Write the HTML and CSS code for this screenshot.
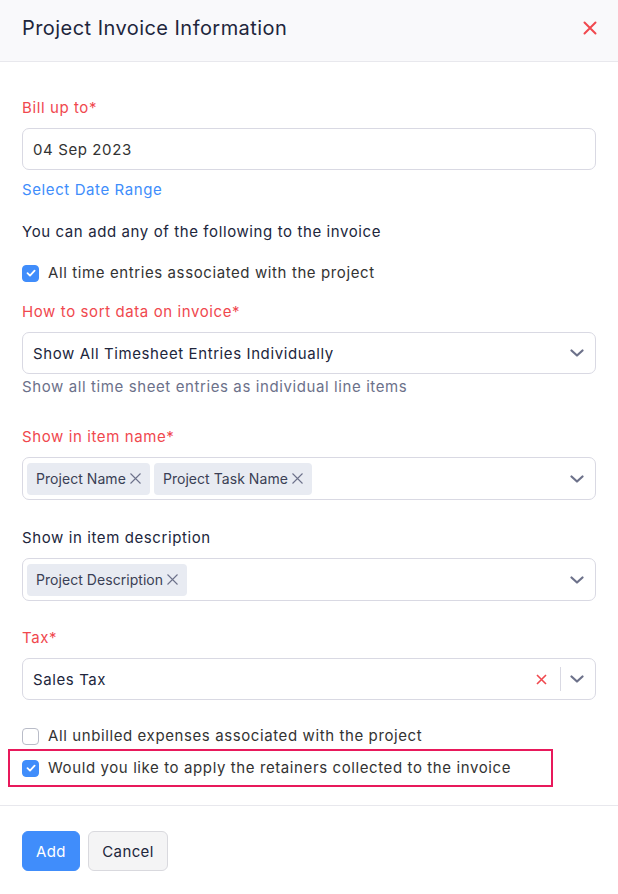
FILE: index.html
```html
<!DOCTYPE html>
<html>
<head>
<meta charset="utf-8">
<link rel="stylesheet" href="styles.css">
</head>
<body>
<div class="modal">
  <div class="header">
    <h1 class="title">Project Invoice Information</h1>
    <span class="close">
      <svg width="14" height="14" viewBox="0 0 14 14"><path d="M1.5 1.5L12.5 12.5M12.5 1.5L1.5 12.5" stroke="#f0484e" stroke-width="2" stroke-linecap="round"/></svg>
    </span>
  </div>
  <div class="body">
    <div class="label req">Bill up to*</div>
    <div class="field input">04 Sep 2023</div>
    <div class="link">Select Date Range</div>
    <div class="intro">You can add any of the following to the invoice</div>
    <div class="check-row row-time">
      <span class="cb checked"><svg width="12" height="12" viewBox="0 0 12 12"><path d="M2.5 6.2L5 8.6L9.6 3.6" fill="none" stroke="#fff" stroke-width="1.8" stroke-linecap="round" stroke-linejoin="round"/></svg></span>
      <span>All time entries associated with the project</span>
    </div>
    <div class="label req lbl-sort">How to sort data on invoice*</div>
    <div class="field select">
      <span class="val">Show All Timesheet Entries Individually</span>
      <svg class="chev" width="14" height="8" viewBox="0 0 14 8"><path d="M1.5 1.5L7 6.5L12.5 1.5" fill="none" stroke="#6c718a" stroke-width="2.2" stroke-linecap="round" stroke-linejoin="round"/></svg>
    </div>
    <div class="help">Show all time sheet entries as individual line items</div>
    <div class="label req lbl-gap">Show in item name*</div>
    <div class="field multi">
      <div class="tags">
        <span class="tag">Project Name<svg width="11" height="11" viewBox="0 0 11 11"><path d="M0.5 0.5L10.5 10.5M10.5 0.5L0.5 10.5" stroke="#6c718a" stroke-width="1.1"/></svg></span>
        <span class="tag">Project Task Name<svg width="11" height="11" viewBox="0 0 11 11"><path d="M0.5 0.5L10.5 10.5M10.5 0.5L0.5 10.5" stroke="#6c718a" stroke-width="1.1"/></svg></span>
      </div>
      <svg class="chev" width="14" height="8" viewBox="0 0 14 8"><path d="M1.5 1.5L7 6.5L12.5 1.5" fill="none" stroke="#6c718a" stroke-width="2.2" stroke-linecap="round" stroke-linejoin="round"/></svg>
    </div>
    <div class="label plain lbl-gap">Show in item description</div>
    <div class="field multi">
      <div class="tags">
        <span class="tag">Project Description<svg width="11" height="11" viewBox="0 0 11 11"><path d="M0.5 0.5L10.5 10.5M10.5 0.5L0.5 10.5" stroke="#6c718a" stroke-width="1.1"/></svg></span>
      </div>
      <svg class="chev" width="14" height="8" viewBox="0 0 14 8"><path d="M1.5 1.5L7 6.5L12.5 1.5" fill="none" stroke="#6c718a" stroke-width="2.2" stroke-linecap="round" stroke-linejoin="round"/></svg>
    </div>
    <div class="label req lbl-gap lbl-tax">Tax*</div>
    <div class="field select">
      <span class="val">Sales Tax</span>
      <span class="clear"><svg width="11" height="11" viewBox="0 0 11 11"><path d="M1 1L10 10M10 1L1 10" stroke="#f0484e" stroke-width="1.6"/></svg></span>
      <span class="sep"></span>
      <svg class="chev" width="14" height="8" viewBox="0 0 14 8"><path d="M1.5 1.5L7 6.5L12.5 1.5" fill="none" stroke="#6c718a" stroke-width="2.2" stroke-linecap="round" stroke-linejoin="round"/></svg>
    </div>
    <div class="check-row row-exp">
      <span class="cb"></span>
      <span>All unbilled expenses associated with the project</span>
    </div>
    <div class="highlight">
      <div class="check-row">
        <span class="cb checked"><svg width="12" height="12" viewBox="0 0 12 12"><path d="M2.5 6.2L5 8.6L9.6 3.6" fill="none" stroke="#fff" stroke-width="1.8" stroke-linecap="round" stroke-linejoin="round"/></svg></span>
        <span>Would you like to apply the retainers collected to the invoice</span>
      </div>
    </div>
  </div>
  <div class="footer">
    <button class="btn primary">Add</button>
    <button class="btn secondary">Cancel</button>
  </div>
</div>
</body>
</html>
```

FILE: styles.css
```css
* { box-sizing: border-box; }
html, body { margin: 0; padding: 0; background: #fff; }
body {
  font-family: Inter, "Noto Sans", "Liberation Sans", sans-serif;
  font-size: 15px;
  letter-spacing: 0.6px;
  color: #21263c;
}
.modal { width: 618px; }
.header {
  height: 62px;
  background: #f9f9fb;
  border-bottom: 1px solid #e8e8ed;
  display: flex;
  align-items: center;
  justify-content: space-between;
  padding: 0 21px 5px 22px;
}
.title {
  margin: 0;
  font-size: 20px;
  font-weight: 400;
  letter-spacing: 0.45px;
  color: #21263c;
  line-height: 24px;
}
.close { display: flex; width: 14px; height: 14px; }
.body { padding: 36px 22px 0 22px; }
.label { line-height: 20px; height: 20px; }
.req { color: #f0484e; }
.plain { color: #21263c; }
.field {
  margin-top: 10px;
  height: 42px;
  border: 1px solid #d9d9e3;
  border-radius: 7px;
  display: flex;
  align-items: center;
}
.input { padding: 0 10px; color: #333; }
.select { padding: 0 11px 0 10px; }
.select .val { flex: 1; color: #21263c; }
.chev { display: block; flex: none; }
.multi { padding: 0 11px 0 4px; height: 43px; }
.multi .tags { flex: 1; display: flex; gap: 4px; }
.tag {
  display: inline-flex;
  align-items: center;
  height: 32px;
  padding: 0 9px 0 9px;
  background: #e8ebf2;
  border-radius: 4px;
  font-size: 14px;
  letter-spacing: 0.05px;
  color: #3a3f55;
  gap: 4px;
}
.tag svg { display: block; }
.clear { display: flex; margin-right: 13px; }
.sep { width: 1px; height: 24px; background: #d9d9e3; margin-right: 9px; }
.link { margin-top: 10px; line-height: 20px; color: #408dfb; }
.intro { margin-top: 22px; line-height: 20px; color: #21263c; }
.check-row { display: flex; align-items: center; line-height: 20px; gap: 9px; color: #333; }
.row-time { margin-top: 21px; }
.row-exp { margin-top: 26px; }
.cb {
  width: 17px; height: 17px;
  border: 1px solid #b9bcc8;
  border-radius: 4px;
  background: #fff;
  display: flex; align-items: center; justify-content: center;
  flex: none;
}
.cb.checked { background: #408dfb; border-color: #408dfb; }
.lbl-sort { margin-top: 19px; }
.help { margin-top: 3px; line-height: 20px; color: #6c718a; }
.lbl-gap { margin-top: 28px; }
.help + .lbl-gap { margin-top: 30px; }
.lbl-tax { margin-top: 27px; }
.highlight {
  margin: 3px 0 0 -14px;
  width: 545px;
  height: 38px;
  border: 2px solid #e8195b;
  padding: 0 12px;
  display: flex;
  align-items: center;
}
.footer {
  margin-top: 18px;
  border-top: 1px solid #e8e8ed;
  padding: 25px 22px 0 22px;
  display: flex;
  gap: 8px;
}
.btn {
  font-family: inherit;
  font-size: 15px;
  letter-spacing: 0.4px;
  height: 40px;
  border-radius: 6px;
  cursor: pointer;
}
.primary { background: #408dfb; color: #fff; border: 1px solid #408dfb; padding: 0; width: 58px; }
.secondary { background: #f4f4f5; color: #21263c; border: 1px solid #d9d9de; width: 80px; padding: 0; }
```
